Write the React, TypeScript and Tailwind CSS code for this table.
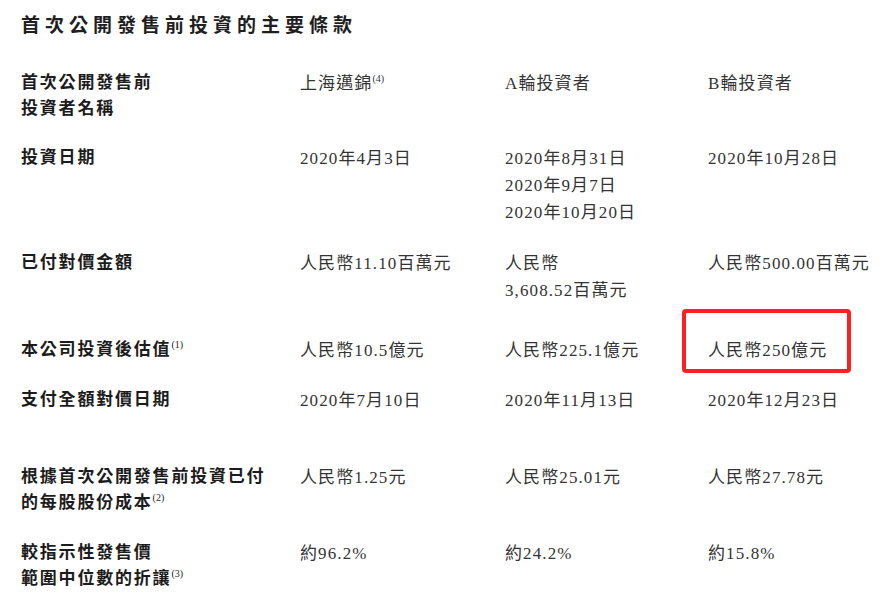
import React from 'react';

type Row = {
    h: string;
    label: string[];
    note?: string;
    values: string[][];
    valueNotes?: (string | undefined)[];
    boxed?: number;
};

const rows: Row[] = [
    { h: 'h-[75px]', label: ['首次公開發售前', '投資者名稱'], values: [['上海邁錦'], ['A輪投資者'], ['B輪投資者']], valueNotes: ['(4)'] },
    { h: 'h-[105px]', label: ['投資日期'], values: [['2020年4月3日'], ['2020年8月31日', '2020年9月7日', '2020年10月20日'], ['2020年10月28日']] },
    { h: 'h-[87px]', label: ['已付對價金額'], values: [['人民幣11.10百萬元'], ['人民幣', '3,608.52百萬元'], ['人民幣500.00百萬元']] },
    { h: 'h-[50px]', label: ['本公司投資後估值'], note: '(1)', values: [['人民幣10.5億元'], ['人民幣225.1億元'], ['人民幣250億元']], boxed: 2 },
    { h: 'h-[77px]', label: ['支付全額對價日期'], values: [['2020年7月10日'], ['2020年11月13日'], ['2020年12月23日']] },
    { h: 'h-[76px]', label: ['根據首次公開發售前投資已付', '的每股股份成本'], note: '(2)', values: [['人民幣1.25元'], ['人民幣25.01元'], ['人民幣27.78元']] },
    { h: 'h-[64px]', label: ['較指示性發售價', '範圍中位數的折讓'], note: '(3)', values: [['約96.2%'], ['約24.2%'], ['約15.8%']] },
];

const Note = ({ text }: { text: string }) => (
    <span className="text-[10px] font-normal tracking-normal leading-none align-[7px]">{text}</span>
);

export default function App() {
    return (
        <div className="w-[887px] h-[604px] overflow-hidden bg-white pl-[21px] pt-[13px] font-['Liberation_Serif','Noto_Sans_CJK_TC',serif]">
            {/* Title */}
            <div className="text-[19px] leading-[26px] font-bold tracking-[5px] text-[#1f1f1f]">
                首次公開發售前投資的主要條款
            </div>

            <div className="mt-[31px]">
                {rows.map((row, ri) => (
                    <div key={ri} className={`grid grid-cols-[279px_205px_203px_1fr] items-start ${row.h}`}>
                        <div className="text-[17px] leading-[26px] font-bold tracking-[1.8px] text-[#1c1c1c]">
                            {row.label.map((line, li) => (
                                <div key={li} className="whitespace-nowrap">
                                    {line}
                                    {li === row.label.length - 1 && row.note && <Note text={row.note} />}
                                </div>
                            ))}
                        </div>
                        {row.values.map((lines, ci) => (
                            <div key={ci} className="relative text-[17px] leading-[27px] tracking-[1.1px] text-[#333333]">
                                {lines.map((line, li) => (
                                    <div key={li} className="whitespace-nowrap">
                                        {line}
                                        {li === 0 && row.valueNotes?.[ci] && <Note text={row.valueNotes[ci]!} />}
                                    </div>
                                ))}
                                {row.boxed === ci && (
                                    <div className="absolute left-[-26px] top-[-28px] w-[169px] h-[64px] border-[4px] border-[#ff1f1f] rounded-[4px]" />
                                )}
                            </div>
                        ))}
                    </div>
                ))}
            </div>
        </div>
    );
}
